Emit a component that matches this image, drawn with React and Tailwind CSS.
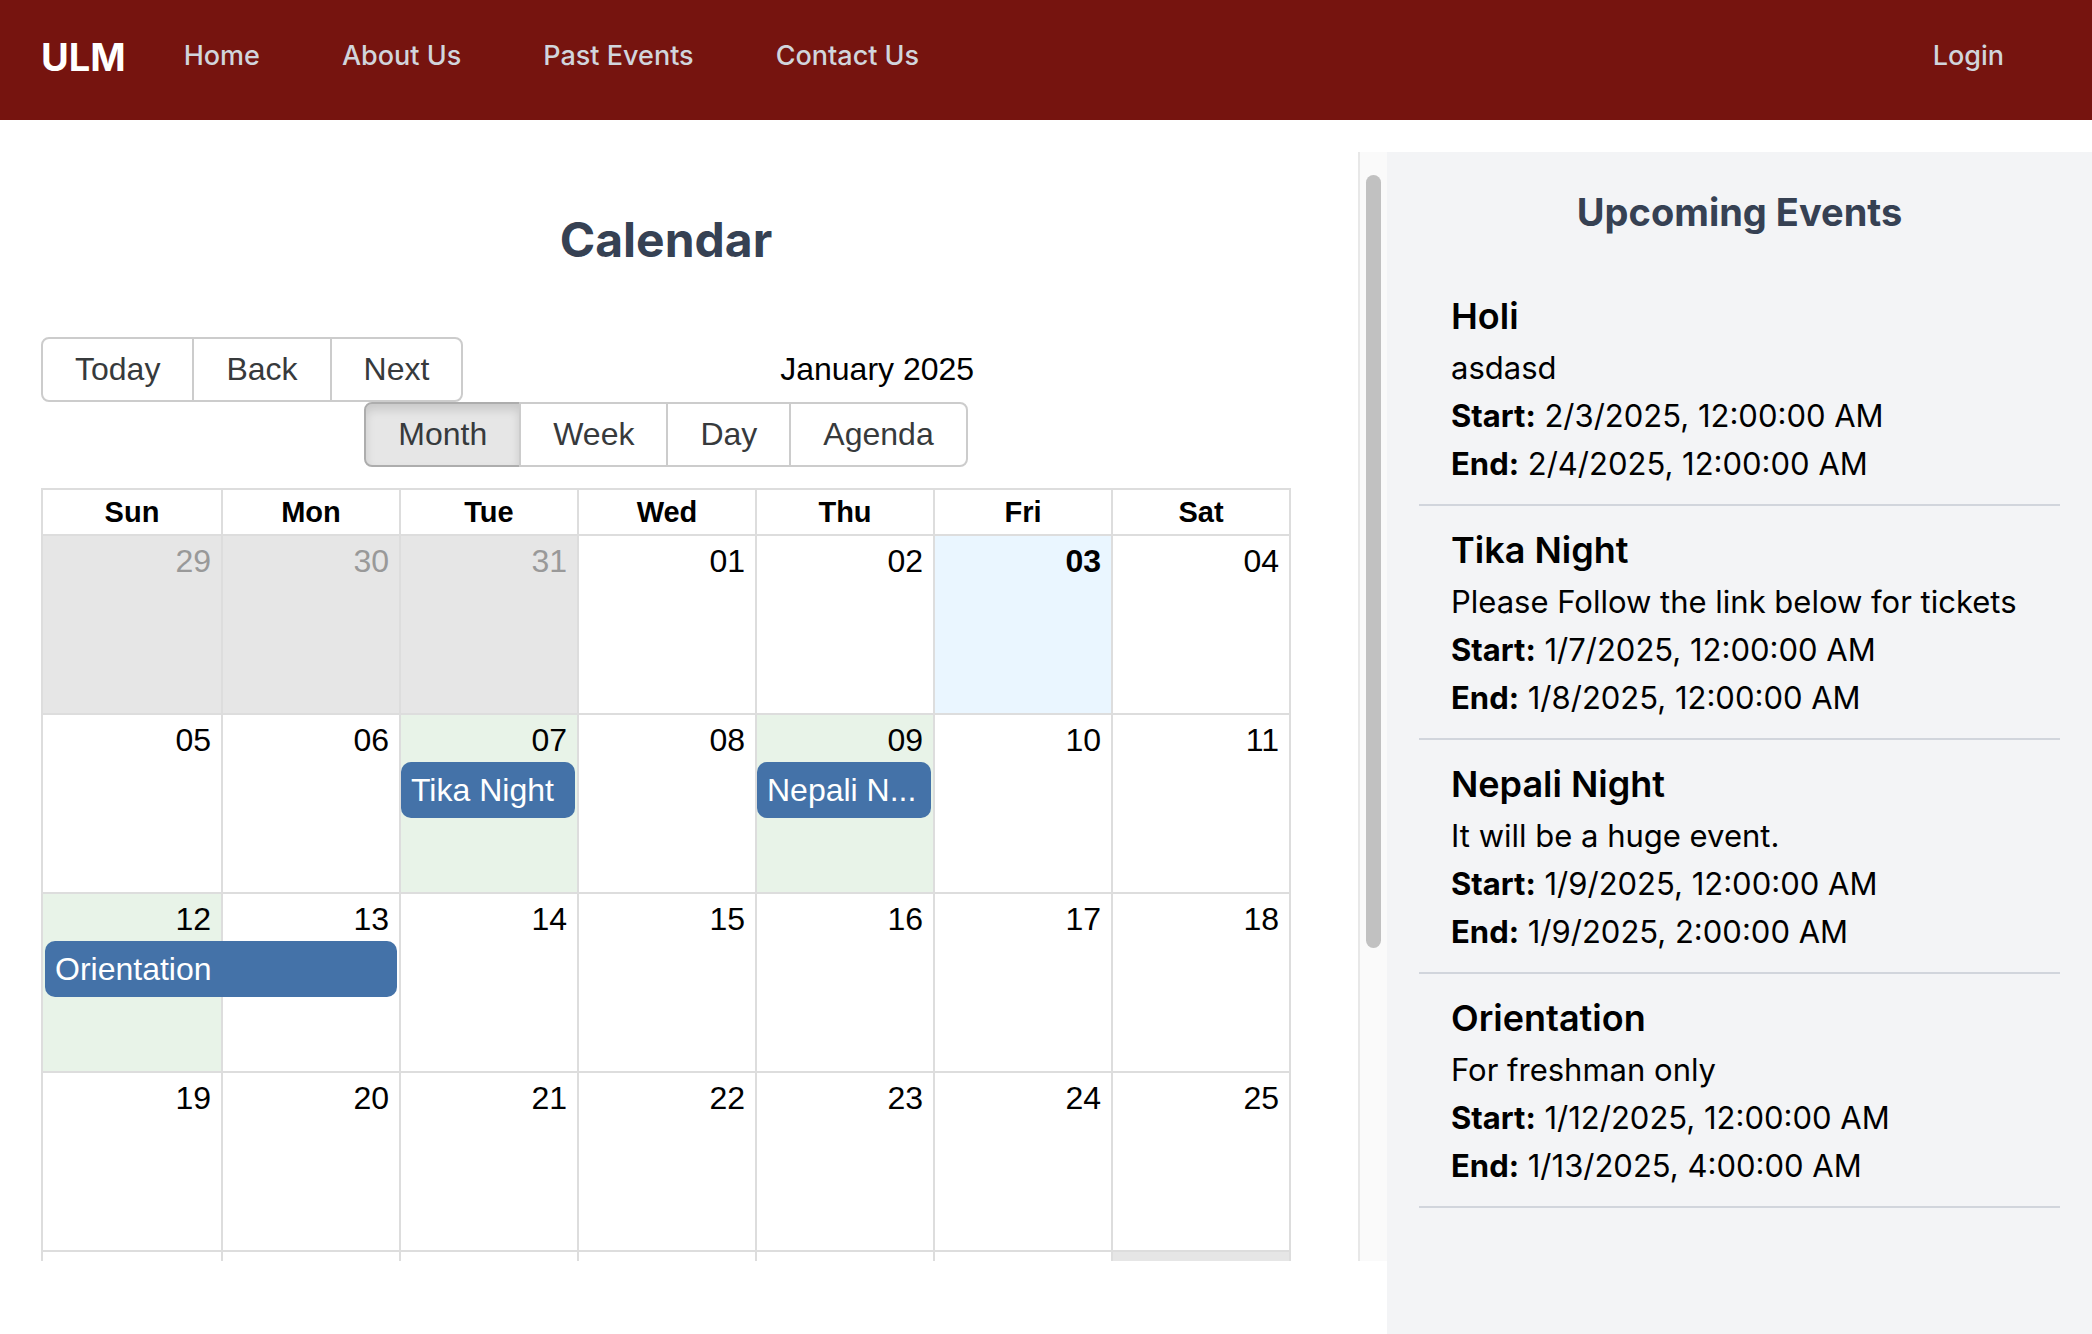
const NAV = ['Home', 'About Us', 'Past Events', 'Contact Us'];

const UPCOMING = [
  { title: 'Holi', desc: 'asdasd', start: '2/3/2025, 12:00:00 AM', end: '2/4/2025, 12:00:00 AM' },
  { title: 'Tika Night', desc: 'Please Follow the link below for tickets', start: '1/7/2025, 12:00:00 AM', end: '1/8/2025, 12:00:00 AM' },
  { title: 'Nepali Night', desc: 'It will be a huge event.', start: '1/9/2025, 12:00:00 AM', end: '1/9/2025, 2:00:00 AM' },
  { title: 'Orientation', desc: 'For freshman only', start: '1/12/2025, 12:00:00 AM', end: '1/13/2025, 4:00:00 AM' },
];

const DAYS = ['Sun', 'Mon', 'Tue', 'Wed', 'Thu', 'Fri', 'Sat'];
const COL_START = ['col-start-1', 'col-start-2', 'col-start-3', 'col-start-4', 'col-start-5', 'col-start-6', 'col-start-7'];
const COL_SPAN = ['', 'col-span-1', 'col-span-2', 'col-span-3'];

// kind: off = outside month, today, ev = day that has an event
const WEEKS = [
  [['29', 'off'], ['30', 'off'], ['31', 'off'], ['01'], ['02'], ['03', 'today'], ['04']],
  [['05'], ['06'], ['07', 'ev'], ['08'], ['09', 'ev'], ['10'], ['11']],
  [['12', 'ev'], ['13'], ['14'], ['15'], ['16'], ['17'], ['18']],
  [['19'], ['20'], ['21'], ['22'], ['23'], ['24'], ['25']],
  [['26'], ['27'], ['28'], ['29'], ['30'], ['31'], ['01', 'off']],
];

const WEEK_EVENTS = [
  [],
  [
    { col: 2, span: 1, title: 'Tika Night' },
    { col: 4, span: 1, title: 'Nepali Night', label: 'Nepali N...' },
  ],
  [{ col: 0, span: 2, title: 'Orientation' }],
  [],
  [],
];

const BG = {
  off: 'bg-[#e6e6e6]',
  today: 'bg-[#eaf6ff]',
  ev: 'bg-[#e8f3e8]',
};

function Navbar() {
  return (
    <header className="flex h-[120px] items-center bg-[#76140f] pb-[7px] pl-[41px] pr-[88px]">
      <span className="text-[38px] font-bold leading-none text-white">ULM</span>
      <nav className="ml-[58px] flex gap-[82px] text-[27px] font-medium text-gray-300">
        {NAV.map((n) => (
          <a key={n} href="#">{n}</a>
        ))}
      </nav>
      <a href="#" className="ml-auto text-[27px] font-medium text-gray-300">Login</a>
    </header>
  );
}

function ToolButton({ label, first, last, active }) {
  return (
    <button
      type="button"
      className={
        'border-2 px-[32px] py-[12px] text-[32px] leading-[37px] text-[#373a3c] ' +
        (first ? 'rounded-l-[8px] ' : '-ml-[2px] ') +
        (last ? 'rounded-r-[8px] ' : '') +
        (active
          ? 'border-[#adadad] bg-[#e6e6e6] shadow-[inset_0_6px_10px_rgba(0,0,0,0.125)]'
          : 'border-[#ccc] bg-white')
      }
    >
      {label}
    </button>
  );
}

function Toolbar() {
  const views = ['Month', 'Week', 'Day', 'Agenda'];
  return (
    <div className="mb-[21px] mt-[65px]">
      <div className="flex items-center">
        <div className="flex">
          {['Today', 'Back', 'Next'].map((b, i) => (
            <ToolButton key={b} label={b} first={i === 0} last={i === 2} />
          ))}
        </div>
        <span className="flex-1 px-[20px] text-center text-[32px] leading-[37px] text-black">January 2025</span>
      </div>
      <div className="flex justify-center">
        {views.map((v, i) => (
          <ToolButton key={v} label={v} first={i === 0} last={i === views.length - 1} active={v === 'Month'} />
        ))}
      </div>
    </div>
  );
}

function WeekRow({ days, events }) {
  return (
    <div className="grid h-[179px] grid-cols-7 grid-rows-[auto_auto_1fr] border-t-2 border-[#ddd]">
      {days.map(([d, kind], i) => (
        <div
          key={'bg' + i}
          className={
            'row-span-full ' + COL_START[i] + ' ' +
            (i > 0 ? 'border-l-2 border-[#ddd] ' : '') +
            (kind ? BG[kind] : 'bg-white')
          }
        />
      ))}
      {days.map(([d, kind], i) => (
        <div
          key={'d' + i}
          className={
            'row-start-1 pr-[10px] pt-[7px] text-right text-[32px] leading-[37px] ' + COL_START[i] + ' ' +
            (kind === 'off' ? 'text-[#999]' : 'text-black') +
            (kind === 'today' ? ' font-bold' : '')
          }
        >
          {d}
        </div>
      ))}
      {events.map((e) => (
        <div
          key={e.title}
          title={e.title}
          className={
            'row-start-2 mx-[2px] mt-[3px] flex h-[56px] min-w-0 items-center overflow-hidden whitespace-nowrap rounded-[10px] bg-[#4472a8] px-[10px] text-[32px] text-white ' +
            COL_START[e.col] + ' ' + COL_SPAN[e.span]
          }
        >
          {e.label || e.title}
        </div>
      ))}
    </div>
  );
}

function MonthView() {
  return (
    <div className="border-2 border-[#ddd]">
      <div className="grid h-[44px] grid-cols-7">
        {DAYS.map((d, i) => (
          <div
            key={d}
            className={'text-center text-[29px] font-bold leading-[44px] text-black ' + (i > 0 ? 'border-l-2 border-[#ddd]' : '')}
          >
            {d}
          </div>
        ))}
      </div>
      {WEEKS.map((w, i) => (
        <WeekRow key={i} days={w} events={WEEK_EVENTS[i]} />
      ))}
    </div>
  );
}

function EventList() {
  return (
    <aside className="flex-1 bg-gray-100 pt-[36px]">
      <h2 className="text-center text-[38px] font-bold leading-[48px] text-gray-700">Upcoming Events</h2>
      <ul className="mx-[32px] mt-[36px]">
        {UPCOMING.map((ev) => (
          <li key={ev.title} className="border-b-2 border-gray-300 py-[16px] pl-[32px] text-black">
            <h3 className="text-[36px] font-semibold leading-[56px]">{ev.title}</h3>
            <p className="text-[31px] leading-[48px]">{ev.desc}</p>
            <p className="text-[31px] leading-[48px]">
              <strong className="font-bold">Start:</strong> {ev.start}
            </p>
            <p className="text-[31px] leading-[48px]">
              <strong className="font-bold">End:</strong> {ev.end}
            </p>
          </li>
        ))}
      </ul>
    </aside>
  );
}

export default function App() {
  return (
    <div className="flex min-h-screen flex-col bg-white font-[Inter,sans-serif]">
      <Navbar />
      <main className="mt-[32px] flex flex-1">
        <section className="flex h-[1109px] w-[1387px] shrink-0">
          <div className="w-[1358px] overflow-hidden pl-[41px] pr-[67px] pt-[56px]">
            <h1 className="text-center text-[48px] font-bold leading-[64px] text-gray-700">Calendar</h1>
            <div className="font-['Liberation_Sans',Arial,sans-serif]">
              <Toolbar />
              <MonthView />
            </div>
          </div>
          {/* scrollbar track */}
          <div className="w-[29px] border-l-2 border-[#e8e8e8] bg-[#fafafa]">
            <div className="ml-[6px] mt-[23px] h-[773px] w-[15px] rounded-full bg-[#c1c1c1]" />
          </div>
        </section>
        <EventList />
      </main>
    </div>
  );
}
